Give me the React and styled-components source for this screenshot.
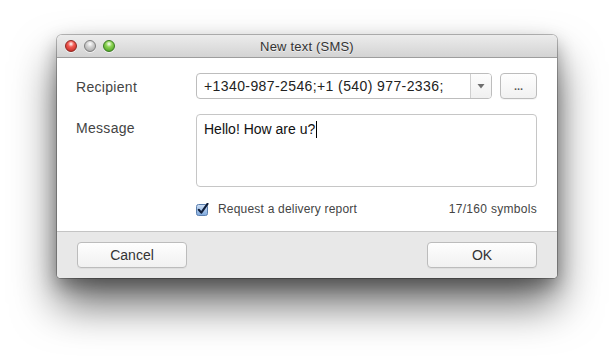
import React from "react";
import styled, { createGlobalStyle } from "styled-components";

const Global = createGlobalStyle`
  html, body { margin: 0; padding: 0; background: #fff; }
  body { font-family: "Liberation Sans", Arial, sans-serif; }
`;

const Page = styled.div`
  width: 614px;
  height: 357px;
  padding: 35px 0 0 57px;
  box-sizing: border-box;
  overflow: hidden;
`;

const Win = styled.div`
  width: 500px;
  border-radius: 5px 5px 4px 4px;
  background: #fff;
  box-shadow: 0 0 0 1px rgba(0,0,0,0.25), 0 26px 44px rgba(0,0,0,0.6), 0 8px 18px rgba(0,0,0,0.3);
  overflow: hidden;
  display: flex;
  flex-direction: column;
`;

const TitleBar = styled.div`
  height: 22px;
  background: linear-gradient(#ececec, #d3d3d3);
  border-bottom: 1px solid #9d9d9d;
  display: flex;
  align-items: center;
  position: relative;
  padding-left: 8px;
  gap: 7px;
`;

const Light = styled.span`
  width: 12px;
  height: 12px;
  border-radius: 50%;
  box-sizing: border-box;
  border: 1px solid ${p => p.$edge};
  background: radial-gradient(circle at 50% 30%, #fff 0, ${p => p.$c1} 35%, ${p => p.$c2} 100%);
  box-shadow: 0 1px 0 rgba(255,255,255,0.6);
`;

const Title = styled.div`
  position: absolute;
  left: 0;
  right: 0;
  top: 0;
  bottom: 0;
  display: flex;
  align-items: center;
  justify-content: center;
  font-size: 13px;
  letter-spacing: 0.2px;
  color: #333;
  text-shadow: 0 1px 0 rgba(255,255,255,0.6);
  pointer-events: none;
`;

const Body = styled.div`
  padding: 15px 20px 0 19px;
  height: 174px;
  box-sizing: border-box;
  display: grid;
  grid-template-columns: 120px 1fr;
  grid-template-rows: 26px 73px 22px;
  row-gap: 15px;
  align-content: start;
  align-items: start;
  border-bottom: 1px solid #c4c4c4;
`;

const Label = styled.div`
  font-size: 14px;
  letter-spacing: 0.3px;
  color: #444;
  line-height: 26px;
  margin-top: ${p => p.$top || 0}px;
`;

const RecipientRow = styled.div`
  display: flex;
  gap: 8px;
`;

const Combo = styled.div`
  flex: 1;
  height: 26px;
  box-sizing: border-box;
  border: 1px solid #bdbdbd;
  border-radius: 4px;
  display: flex;
  overflow: hidden;
  background: #fff;
`;

const ComboText = styled.div`
  flex: 1;
  font-size: 14px;
  letter-spacing: 0.4px;
  color: #222;
  padding-left: 7px;
  line-height: 24px;
  white-space: nowrap;
`;

const ComboArrow = styled.div`
  width: 20px;
  border-left: 1px solid #cfcfcf;
  background: linear-gradient(#fdfdfd, #f0f0f0);
  display: flex;
  align-items: center;
  justify-content: center;
`;

const Btn = styled.button`
  width: ${p => p.$w}px;
  height: 26px;
  box-sizing: border-box;
  border: 1px solid #bcbcbc;
  border-radius: 4px;
  background: linear-gradient(#fefefe, #f1f1f1);
  font-family: "Liberation Sans", Arial, sans-serif;
  font-size: ${p => p.$fs || 14}px;
  font-weight: ${p => p.$bold ? 700 : 400};
  color: ${p => p.$muted ? "#5a5a5a" : "#333"};
  padding: 0;
  box-shadow: 0 1px 0 rgba(0,0,0,0.04);
`;

const TextArea = styled.div`
  height: 73px;
  box-sizing: border-box;
  border: 1px solid #c6c6c6;
  border-radius: 4px;
  padding: 6px 7px;
  font-size: 14px;
  color: #111;
  line-height: 16px;
  display: flex;
  align-items: flex-start;
`;

const Caret = styled.span`
  display: inline-block;
  width: 1px;
  height: 17px;
  background: #000;
  margin-left: 1px;
`;

const OptionsRow = styled.div`
  display: flex;
  align-items: center;
  justify-content: space-between;
  height: 22px;
  margin-top: -4px;
`;

const Check = styled.label`
  display: flex;
  align-items: center;
  gap: 9px;
  font-size: 12px;
  letter-spacing: 0.2px;
  color: #444;
`;

const Counter = styled.div`
  font-size: 12px;
  letter-spacing: 0.3px;
  color: #444;
`;

const Footer = styled.div`
  height: 46px;
  background: #e8e8e8;
  display: flex;
  justify-content: space-between;
  align-items: flex-start;
  padding: 10px 20px 0;
  box-sizing: border-box;
`;

const Spacer = styled.div``;

export default function App() {
  return (
    <>
      <Global />
      <Page>
        <Win>
          <TitleBar>
            <Light $c1="#f25a52" $c2="#b8201b" $edge="#8f2620" />
            <Light $c1="#d4d4d4" $c2="#9e9e9e" $edge="#7e7e7e" />
            <Light $c1="#8ed454" $c2="#3e9a1a" $edge="#3a7a22" />
            <Title>New text (SMS)</Title>
          </TitleBar>
          <Body>
            <Label $top={1}>Recipient</Label>
            <RecipientRow>
              <Combo>
                <ComboText>+1340-987-2546;+1 (540) 977-2336;</ComboText>
                <ComboArrow>
                  <svg width="8" height="6" viewBox="0 0 8 6">
                    <path d="M0.5 1 L7.5 1 L4 5.5 Z" fill="#6e6e6e" />
                  </svg>
                </ComboArrow>
              </Combo>
              <Btn $w={37} $fs={11} $bold $muted>...</Btn>
            </RecipientRow>
            <Label $top={1}>Message</Label>
            <TextArea>
              Hello! How are u?<Caret />
            </TextArea>
            <Spacer />
            <OptionsRow>
              <Check>
                <svg width="13" height="13" viewBox="0 0 13 13">
                  <defs>
                    <linearGradient id="cb" x1="0" y1="0" x2="0" y2="1">
                      <stop offset="0" stopColor="#cfe0f5" />
                      <stop offset="1" stopColor="#7fa9de" />
                    </linearGradient>
                  </defs>
                  <rect x="0.5" y="1.5" width="11" height="11" rx="2" fill="url(#cb)" stroke="#5a7fae" />
                  <path d="M2.8 6.8 L5.3 9.6 L11.5 0.8" fill="none" stroke="#0f1e3a" strokeWidth="2.1" strokeLinecap="round" strokeLinejoin="round" />
                </svg>
                Request a delivery report
              </Check>
              <Counter>17/160 symbols</Counter>
            </OptionsRow>
          </Body>
          <Footer>
            <Btn $w={110}>Cancel</Btn>
            <Btn $w={110}>OK</Btn>
          </Footer>
        </Win>
      </Page>
    </>
  );
}
